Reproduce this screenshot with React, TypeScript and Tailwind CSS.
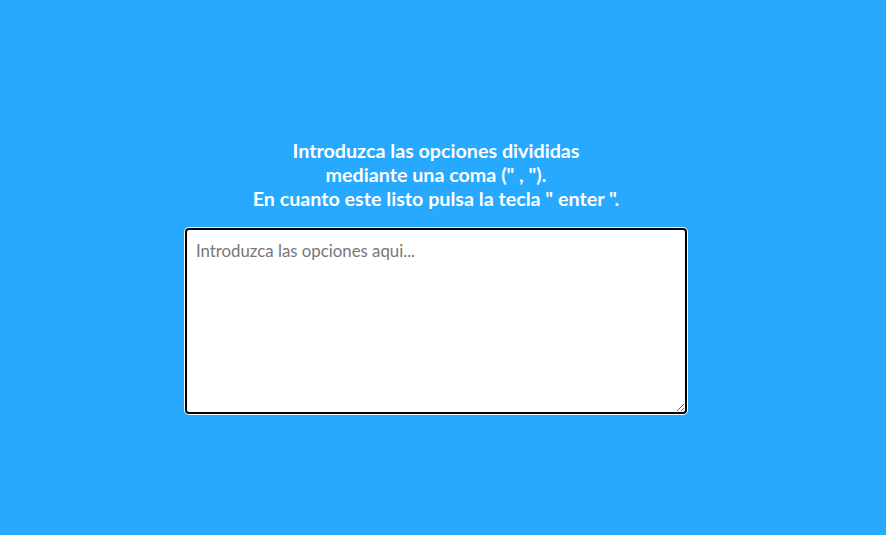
export default function App() {
  return (
    <div className="flex h-[535px] w-full flex-col items-center bg-[#26a9ff] pr-[14px] pt-[139px] font-['Lato','Noto_Sans',sans-serif]">
      <h1 className="text-center text-[19.7px] font-bold leading-[24px] text-white">
        Introduzca las opciones divididas
        <br />
        mediante una coma (" , ").
        <br />
        En cuanto este listo pulsa la tecla " enter ".
      </h1>
      <textarea
        placeholder="Introduzca las opciones aqui..."
        className="mt-[17px] h-[186px] w-[502px] rounded-[4px] border-2 border-black bg-white px-[9px] pt-[8px] pb-[10px] text-[16.8px] text-black ring-1 ring-white outline-none placeholder:text-[#777]"
      />
    </div>
  );
}
